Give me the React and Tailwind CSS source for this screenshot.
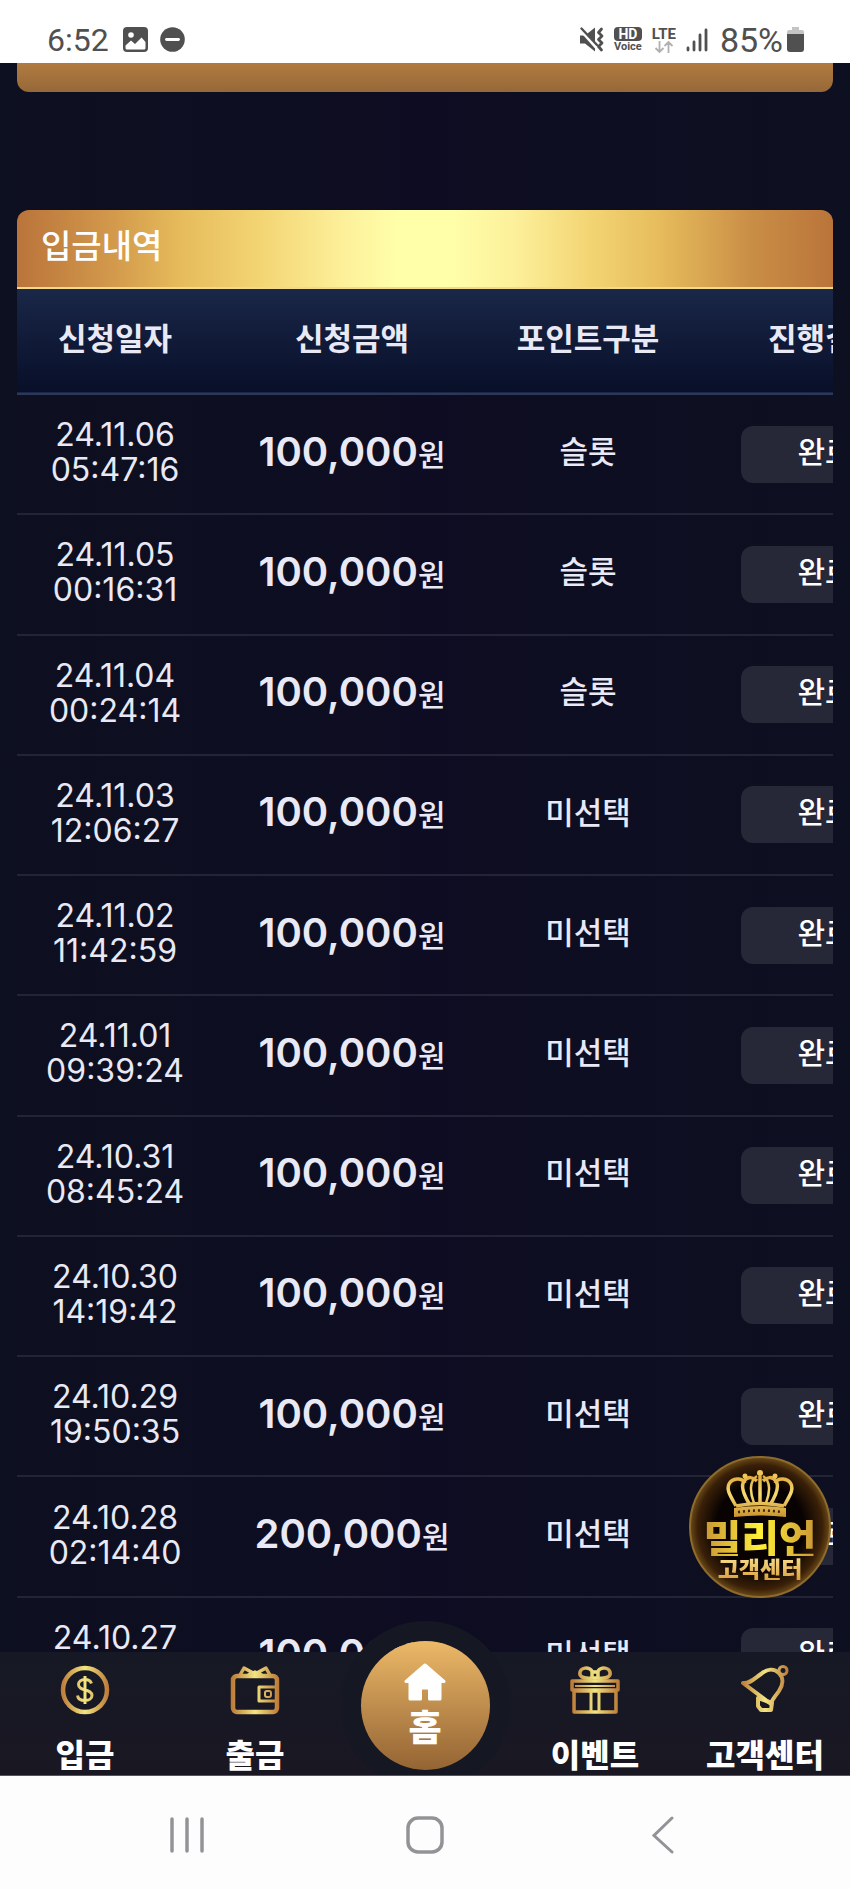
const deposits = [
    { date: "24.11.06", time: "05:47:16", amount: "100,000", type: "슬롯" },
    { date: "24.11.05", time: "00:16:31", amount: "100,000", type: "슬롯" },
    { date: "24.11.04", time: "00:24:14", amount: "100,000", type: "슬롯" },
    { date: "24.11.03", time: "12:06:27", amount: "100,000", type: "미선택" },
    { date: "24.11.02", time: "11:42:59", amount: "100,000", type: "미선택" },
    { date: "24.11.01", time: "09:39:24", amount: "100,000", type: "미선택" },
    { date: "24.10.31", time: "08:45:24", amount: "100,000", type: "미선택" },
    { date: "24.10.30", time: "14:19:42", amount: "100,000", type: "미선택" },
    { date: "24.10.29", time: "19:50:35", amount: "100,000", type: "미선택" },
    { date: "24.10.28", time: "02:14:40", amount: "200,000", type: "미선택" },
    { date: "24.10.27", time: "", amount: "100,000", type: "미선택" },
];

const StatusBar = () => (
    <header className="flex h-[63px] shrink-0 items-center justify-between bg-white pt-4 pl-[47px] pr-[46px] font-['Roboto',sans-serif] text-[#505050]">
        <div className="flex items-center">
            <span className="text-[32px] leading-8">6:52</span>
            <svg viewBox="0 0 25 25" className="ml-[14px] size-[25px]">
                <rect width="25" height="25" rx="4" fill="currentColor" />
                <circle cx="8" cy="8" r="2.8" fill="#fff" />
                <path d="M2.5 18.5 8 13.500l4 3.500 6.500-6.500 4 4.500v6a1.500 1.500 0 0 1-1.500 1.500H4A1.500 1.500 0 0 1 2.500 21z" fill="#fff" />
            </svg>
            <svg viewBox="0 0 25 25" className="ml-3 size-[25px]">
                <circle cx="12.500" cy="12.500" r="12.300" fill="currentColor" />
                <path d="M6.500 12.500h12" stroke="#fff" strokeWidth="2.800" strokeLinecap="round" />
            </svg>
        </div>
        <div className="flex items-center">
            <svg viewBox="0 0 25 25" className="mr-[10px] size-[25px]" fill="none">
                <path d="M1 8.500h5l10-8v24l-10-8H1z" fill="currentColor" />
                <path d="M0 1l18 20" stroke="#fff" strokeWidth="3.500" />
                <path d="M2.500 1.500 18 18" stroke="currentColor" strokeWidth="2.400" strokeLinecap="round" />
                <path d="m22.500 2-3 3.500 3.500 3.500-3.500 3.500 3.500 3.500-3.500 3.500 3 3.500" stroke="currentColor" strokeWidth="2.800" strokeLinecap="round" strokeLinejoin="round" />
            </svg>
            <div className="mr-2 flex w-7 flex-col items-center font-bold">
                <span className="w-full rounded-sm bg-[#505050] text-center text-[14px] leading-[14px] text-white">HD</span>
                <span className="text-[11px] leading-3">Voice</span>
            </div>
            <div className="mr-2 flex w-7 flex-col items-center">
                <span className="text-[15px] leading-[14px] font-bold">LTE</span>
                <svg viewBox="0 0 20 12" className="h-3 w-5 text-[#b0b0b0]" fill="none" stroke="currentColor" strokeWidth="1.800">
                    <path d="M5.500 0v11M1.500 7l4 4 4-4M14.500 12V1M10.500 5l4-4 4 4" />
                </svg>
            </div>
            <svg viewBox="0 0 22 24" className="mr-3 h-6 w-[22px]" stroke="currentColor" strokeWidth="2.800" strokeLinecap="round">
                <path d="M2 20v2M8 14v8M14 7v15M20 2v20" />
            </svg>
            <span className="text-[34px] leading-8">85%</span>
            <svg viewBox="0 0 17 25" className="ml-1 h-[25px] w-[17px]">
                <path d="M5 0h7v3h3a2 2 0 0 1 2 2v4H0V5a2 2 0 0 1 2-2h3z" fill="#c4c4c4" />
                <path d="M0 7h17v15a3 3 0 0 1-3 3H3a3 3 0 0 1-3-3z" fill="currentColor" />
            </svg>
        </div>
    </header>
);

const DepositTable = () => (
    <table className="w-full min-w-[948px] h-[1429px] table-fixed border-collapse text-center text-[31px] text-[#e9e9f5]">
        <colgroup>
            <col className="w-[196px]" />
            <col className="w-[278px]" />
            <col className="w-[194px]" />
            <col className="w-[280px]" />
        </colgroup>
        <thead>
            <tr className="h-[105px] border-b-2 border-[#2d3856] bg-linear-to-b from-[#1a2748] to-[#080f29]">
                <th className="pb-2 font-bold">신청일자</th>
                <th className="pb-2 font-bold">신청금액</th>
                <th className="pb-2 font-bold">포인트구분</th>
                <th className="pb-2 font-bold">진행결과</th>
            </tr>
        </thead>
        <tbody>
            {deposits.map((item) => (
                <tr key={item.date} className="border-b-2 border-[#232436]">
                    <td className="pb-1 font-['Inter',sans-serif] text-[32px] leading-[35px]">
                        <div className="h-[70px]">{item.date}<br />{item.time}</div>
                    </td>
                    <td className="pb-1 leading-10 whitespace-nowrap">
                        <span className="font-['Inter',sans-serif] text-[40px] font-semibold">{item.amount}</span>
                        <span className="text-[30px] font-medium">원</span>
                    </td>
                    <td className="pb-2 font-medium">{item.type}</td>
                    <td>
                        <span className="mx-auto flex h-[57px] w-[168px] items-center justify-center rounded-xl bg-[#262737] pb-2 text-[30px] font-medium text-white">완료</span>
                    </td>
                </tr>
            ))}
        </tbody>
    </table>
);

const SupportButton = () => (
    <button
        type="button"
        className="absolute right-[19px] bottom-[54px] flex size-[142px] flex-col items-center rounded-full border-2 border-[#8d6b2c] bg-[radial-gradient(circle,#080302_45%,#3a2008_64%,#6d4c18_72%)] pt-3 font-black"
    >
        <svg viewBox="0 0 68 48" className="h-12 w-[68px]" fill="none">
            <defs>
                <linearGradient id="crownGold" x1="0" y1="0" x2="0" y2="48" gradientUnits="userSpaceOnUse">
                    <stop offset="0" stopColor="#d89b2c" />
                    <stop offset="0.5" stopColor="#f8dc72" />
                    <stop offset="1" stopColor="#c98f2c" />
                </linearGradient>
            </defs>
            <g stroke="url(#crownGold)" strokeWidth="3.500" strokeLinejoin="round">
                <path d="M10 36C5 27 0 20 3 14s13-7 16-1" />
                <path d="M58 36c5-9 10-16 7-22s-13-7-16-1" />
                <path d="M24 35c-5-8-10-18-6-24 4-5 9-4 13 0" />
                <path d="M44 35c5-8 10-18 6-24-4-5-9-4-13 0" />
                <path d="M10 36q24-5 48 0" />
                <path d="M34 6v27" />
                <path d="M31 6c-8 5-7 17-3 27M37 6c8 5 7 17 3 27" strokeWidth="2.500" />
            </g>
            <path d="M8 38q26-4 52 0v9q-26-3-52 0z" fill="url(#crownGold)" />
            <path d="M12 42q22-3 44 0" stroke="#3c2505" strokeWidth="2.500" strokeDasharray="2 3" />
            <g fill="#f0c654">
                <circle cx="34" cy="3" r="3" />
                <circle cx="19" cy="6" r="2.500" />
                <circle cx="49" cy="6" r="2.500" />
            </g>
        </svg>
        <span className="bg-linear-to-r from-[#c89535] via-[#fff035] to-[#c89535] bg-clip-text text-[41px] leading-[38px] whitespace-nowrap text-transparent">밀리언</span>
        <span className="bg-linear-to-b from-[#f8df8d] to-[#dba13c] bg-clip-text text-[23px] leading-6 whitespace-nowrap text-transparent">고객센터</span>
    </button>
);

const GoldIcon = ({ id, children }) => (
    <svg viewBox="0 0 50 50" className="size-[50px]" fill="none" stroke={`url(#${id})`} strokeWidth="4.500" strokeLinejoin="round">
        <defs>
            <linearGradient id={id} x1="0" y1="0" x2="50" y2="0" gradientUnits="userSpaceOnUse">
                <stop offset="0" stopColor="#b87434" />
                <stop offset="0.500" stopColor="#f2e581" />
                <stop offset="1" stopColor="#b87434" />
            </linearGradient>
        </defs>
        {children}
    </svg>
);

const TabLink = ({ label, children }) => (
    <a href="#" className="flex flex-col items-center pt-[13px]">
        {children}
        <span className="mt-4 text-[32px] leading-[45px] font-black whitespace-nowrap">{label}</span>
    </a>
);

const TabBar = () => (
    <nav className="relative z-10 grid h-[123px] shrink-0 grid-cols-5 bg-linear-to-b from-[#161925] to-[#191722] text-white">
        <TabLink label="입금">
            <GoldIcon id="goldDeposit">
                <circle cx="25" cy="25" r="22" />
                <path d="M31.500 18.500c-1-3-3.500-4-6.500-4-4 0-6.500 2-6.500 5 0 7.500 13.500 3.500 13.500 11 0 3-3 5-7 5s-7-1.500-7.500-5M25 11v28" strokeWidth="3" />
            </GoldIcon>
        </TabLink>
        <TabLink label="출금">
            <GoldIcon id="goldWithdraw">
                <rect x="3" y="11" width="44" height="36" rx="4" />
                <path d="M10 10l4-7 11 6 11-6 4 7M18 10l7-3 7 3" strokeWidth="3.500" />
                <path d="M46 22H29v14h17" strokeWidth="3" />
                <rect x="35" y="26" width="6" height="6" rx="2" strokeWidth="2" />
            </GoldIcon>
        </TabLink>
        <a
            href="#"
            className="-mt-[11px] flex size-[129px] flex-col items-center justify-self-center rounded-full bg-linear-to-b from-[#ecb968] to-[#946434] pt-[22px] shadow-[0_0_0_20px_#151823]"
        >
            <svg viewBox="0 0 42 38" className="h-[38px] w-[42px]" fill="#fff" stroke="#fff" strokeWidth="3" strokeLinejoin="round">
                <path d="M21 2 2 18.500h4V36h10.500V27q0-2 2-2h5q2 0 2 2v9H36V18.500h4z" />
            </svg>
            <span className="mt-1 text-[36px] leading-10 font-black">홈</span>
        </a>
        <TabLink label="이벤트">
            <GoldIcon id="goldEvent">
                <path d="M4 26h42v21H4zM2 16h46v9H2z" strokeWidth="3.500" />
                <path d="M21 27v20M29 27v20" strokeWidth="3" />
                <path d="M5 21h40" strokeWidth="2" />
                <path d="M22 13C12 14 9 11 10 7s8-6 12-1v7zM28 13c10 1 13-2 12-6s-8-6-12-1zM22 7h6v6h-6z" strokeWidth="3.500" />
            </GoldIcon>
        </TabLink>
        <TabLink label="고객센터">
            <GoldIcon id="goldSupport">
                <path d="M3 18c7 1 12-5 18-9 6-5 13-6 18-1s4 12 0 18-7 8-8 13L3 18z" strokeWidth="4" />
                <circle cx="43" cy="5.500" r="4" strokeWidth="3" />
                <path d="M18 33v8l3 4h10l1-7z" strokeWidth="4" />
            </GoldIcon>
        </TabLink>
    </nav>
);

const SystemNav = () => (
    <footer className="relative z-20 flex h-[114px] shrink-0 items-center justify-center gap-[200px] border-t border-[#555] bg-[#fdfdfd] pt-1 text-[#949297]">
        <button type="button" aria-label="최근 앱">
            <svg viewBox="0 0 38 38" className="size-[38px]" stroke="currentColor" strokeWidth="3.500" strokeLinecap="round">
                <path d="M4 3v32M19 3v32M34 3v32" />
            </svg>
        </button>
        <button type="button" aria-label="홈 화면">
            <svg viewBox="0 0 38 38" className="size-[38px]" fill="none" stroke="currentColor" strokeWidth="3.500">
                <rect x="2" y="2" width="34" height="34" rx="10" />
            </svg>
        </button>
        <button type="button" aria-label="뒤로">
            <svg viewBox="0 0 38 38" className="size-[38px]" fill="none" stroke="currentColor" strokeWidth="3" strokeLinecap="round">
                <path d="M28 2 10 19.500 28 36" />
            </svg>
        </button>
    </footer>
);

const App = () => {
    return (
        <div className="flex h-screen flex-col overflow-hidden bg-[#0d1020] font-['Noto_Sans_CJK_KR',sans-serif]">
            <StatusBar />
            <div className="relative min-h-0 flex-1">
                <main className="h-full overflow-hidden bg-linear-to-r from-[#0d1020] via-[#0e0c22] to-[#0d1020] px-[17px]">
                    <div className="h-[29px] rounded-b-xl bg-linear-to-b from-[#b17b40] to-[#966838]" />
                    <section className="mt-[118px] overflow-hidden rounded-t-xl">
                        <h2 className="flex h-[79px] items-center border-b-2 border-[#f6d988] bg-[linear-gradient(90deg,#ba743a_0%,#d39a4c_12%,#e6bb5b_20%,#f3d574_30%,#fdf09a_40%,#ffffaa_47%,#ffffaa_53%,#fdf09a_61%,#f3d574_70%,#e6bb5b_79%,#c98e46_90%,#ba743a_100%)] px-6 pb-2 text-[33px] font-medium text-white">
                            입금내역
                        </h2>
                        <DepositTable />
                    </section>
                </main>
                <SupportButton />
            </div>
            <TabBar />
            <SystemNav />
        </div>
    );
};

export default App;
